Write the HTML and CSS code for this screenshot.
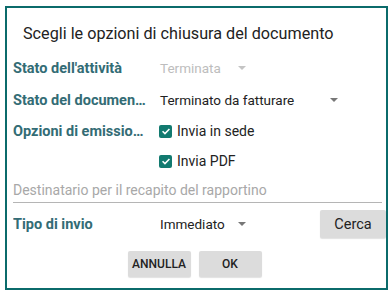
FILE: index.html
```html
<!DOCTYPE html>
<html lang="it">
<head>
  <meta charset="UTF-8" />
  <meta name="viewport" content="width=device-width, initial-scale=1" />
  <title>Chiusura documento</title>
  <link rel="stylesheet" href="styles.css">
</head>
<body>
  <div class="dialog">
    <div class="title">Scegli le opzioni di chiusura del documento</div>

    <div class="row row-1">
      <div class="label">Stato dell'attività</div>
      <div class="select select-short disabled">
        <span>Terminata</span><span class="arrow"></span>
      </div>
    </div>

    <div class="row row-2">
      <div class="label">Stato del documento</div>
      <div class="select select-long">
        <span>Terminato da fatturare</span><span class="arrow"></span>
      </div>
    </div>

    <div class="row row-3">
      <div class="label">Opzioni di emissione</div>
      <label class="check"><span class="box"><svg viewBox="0 0 14 14" width="14" height="14"><path d="M3 7.2 L5.8 10 L11 4.6" fill="none" stroke="#fff" stroke-width="1.8"/></svg></span>Invia in sede</label>
    </div>

    <div class="row row-4">
      <div class="label"></div>
      <label class="check"><span class="box"><svg viewBox="0 0 14 14" width="14" height="14"><path d="M3 7.2 L5.8 10 L11 4.6" fill="none" stroke="#fff" stroke-width="1.8"/></svg></span>Invia PDF</label>
    </div>

    <div class="field">
      <span class="placeholder">Destinatario per il recapito del rapportino</span>
    </div>

    <div class="row row-5">
      <div class="label">Tipo di invio</div>
      <div class="select select-short">
        <span>Immediato</span><span class="arrow"></span>
      </div>
      <button class="btn btn-search">Cerca</button>
    </div>

    <div class="actions">
      <button class="btn btn-action">ANNULLA</button>
      <button class="btn btn-action">OK</button>
    </div>
  </div>
</body>
</html>
```

FILE: styles.css
```css
* {
  margin: 0;
  padding: 0;
  box-sizing: border-box;
}

html, body {
  background: #fff;
  font-family: 'Roboto', 'Liberation Sans', sans-serif;
  color: #222;
}

.dialog {
  width: 383px;
  height: 284px;
  margin: 6px 0 0 5px;
  border: 2px solid #0b6b6b;
  display: flex;
  flex-direction: column;
}

.title {
  height: 44px;
  padding: 6px 0 0 16px;
  display: flex;
  align-items: center;
  font-size: 16.2px;
  color: #222;
}

.row {
  display: flex;
  align-items: center;
  padding-left: 6px;
}

.row-1 { height: 32px; }
.row-2 { height: 32px; }
.row-3 { height: 30px; }
.row-4 { height: 30px; }
.row-5 { height: 42px; }

.label {
  width: 133px;
  margin-right: 14px;
  flex-shrink: 0;
  font-size: 14.5px;
  font-weight: 700;
  color: #336c75;
  white-space: nowrap;
  overflow: hidden;
  text-overflow: ellipsis;
}

.select {
  display: flex;
  align-items: center;
  justify-content: space-between;
  font-size: 13.5px;
  color: #222;
}

.select-short { width: 86px; }
.select-long { width: 178px; }

.select.disabled { color: #bdbdbd; }

.arrow {
  width: 0;
  height: 0;
  border-left: 4px solid transparent;
  border-right: 4px solid transparent;
  border-top: 4px solid #777;
}

.select.disabled .arrow { border-top-color: #c4c4c4; }

.check {
  display: flex;
  align-items: center;
  font-size: 14px;
  color: #222;
}

.box {
  width: 13px;
  height: 13px;
  margin-left: -1px;
  margin-right: 5px;
  background: #127a70;
  border-radius: 2px;
  display: flex;
  align-items: center;
  justify-content: center;
}

.box svg {
  width: 12px;
  height: 12px;
}

.field {
  height: 27px;
  margin: 0 4px 0 6px;
  border-bottom: 1px solid #b5b5b5;
  display: flex;
  align-items: center;
  padding-top: 1px;
}

.placeholder {
  font-size: 14px;
  color: #a8a8a8;
}

.btn {
  font-family: 'Roboto', 'Liberation Sans', sans-serif;
  border: none;
  background: #dcdcdc;
  color: #222;
  border-radius: 2px;
  box-shadow: 0 1px 1px rgba(0, 0, 0, 0.12);
}

.btn-search {
  margin-left: auto;
  width: 66px;
  height: 28px;
  font-size: 14.5px;
}

.actions {
  display: flex;
  justify-content: center;
  gap: 8px;
  padding-top: 6px;
  padding-right: 4px;
}

.btn-action {
  width: 63px;
  height: 26px;
  font-size: 12px;
  font-weight: 500;
}
```
